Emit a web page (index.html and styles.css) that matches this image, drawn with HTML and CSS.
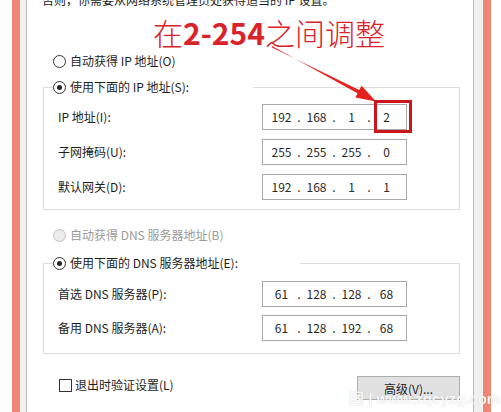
FILE: index.html
```html
<!DOCTYPE html>
<html lang="zh-CN">
  <head>
    <meta charset="UTF-8" />
    <meta name="viewport" content="width=device-width, initial-scale=1.0" />
    <title>IP 设置</title>
    <link rel="stylesheet" href="styles.css">
  </head>
  <body>
    <div class="screen">
      <div class="gutter"></div>
      <div class="frame"></div>
      <div class="chrome"></div>

      <div class="dialog">
        <p class="intro">否则，你需要从网络系统管理员处获得适当的 IP 设置。</p>
        <h1 class="note">在<b>2-254</b>之间调整</h1>

        <label class="radio"><span class="dot"></span>自动获得 IP 地址(O)</label>

        <fieldset class="group group-ip">
          <legend>
            <label class="radio"><span class="dot on"></span>使用下面的 IP 地址(S):</label>
          </legend>
          <div class="row">
            <span class="row-label">IP 地址(I):</span>
            <div class="ip"><span>192</span><i>.</i><span>168</span><i>.</i><span>1</span><i>.</i><span>2</span></div>
          </div>
          <div class="row">
            <span class="row-label">子网掩码(U):</span>
            <div class="ip"><span>255</span><i>.</i><span>255</span><i>.</i><span>255</span><i>.</i><span>0</span></div>
          </div>
          <div class="row">
            <span class="row-label">默认网关(D):</span>
            <div class="ip"><span>192</span><i>.</i><span>168</span><i>.</i><span>1</span><i>.</i><span>1</span></div>
          </div>
        </fieldset>

        <label class="radio radio-dns off"><span class="dot"></span>自动获得 DNS 服务器地址(B)</label>

        <fieldset class="group group-dns">
          <legend>
            <label class="radio"><span class="dot on"></span>使用下面的 DNS 服务器地址(E):</label>
          </legend>
          <div class="row">
            <span class="row-label">首选 DNS 服务器(P):</span>
            <div class="ip"><span>61</span><i>.</i><span>128</span><i>.</i><span>128</span><i>.</i><span>68</span></div>
          </div>
          <div class="row">
            <span class="row-label">备用 DNS 服务器(A):</span>
            <div class="ip"><span>61</span><i>.</i><span>128</span><i>.</i><span>192</span><i>.</i><span>68</span></div>
          </div>
        </fieldset>

        <div class="footer">
          <label class="check"><span class="box"></span>退出时验证设置(L)</label>
          <button type="button" class="advanced">高级(V)...</button>
        </div>
      </div>

      <div class="chrome chrome-right"></div>
      <div class="frame"></div>
      <div class="gutter gutter-right"></div>

      <!-- annotation drawn over the screenshot -->
      <svg class="marks" width="501" height="412" viewBox="0 0 501 412">
        <polygon points="272,46 357.5,93.2 355.5,97.5 376,101.5 361.6,85.8 359.1,90 272,47.6" fill="#e5221d" />
        <rect x="375.5" y="101.5" width="35" height="30" fill="none" stroke="#cc161c" stroke-width="3" />
      </svg>
      <div class="watermark">图 | www.zqcyzg.com</div>
    </div>
  </body>
</html>
```

FILE: styles.css
```css
body {
  margin: 0;
  background: #fff;
  font-family: "Noto Sans CJK SC", sans-serif;
  font-size: 12px;
  color: #1e1e1e;
}

.screen {
  position: relative;
  display: flex;
  height: 412px;
  overflow: hidden;
}

.gutter {
  width: 12px;
  flex: none;
}

.gutter-right {
  width: 10px;
}

.frame {
  width: 8px;
  flex: none;
  background: #ef8577;
}

.chrome {
  width: 6px;
  flex: none;
  background: #f0f0f0;
}

.chrome-right {
  width: 9px;
}

.dialog {
  width: 448px;
  flex: none;
  box-sizing: border-box;
  padding: 0 13px 0 16px;
  border-left: 1px solid #b9b9b9;
  border-right: 1px solid #b9b9b9;
}

.intro {
  margin: -8px 0 0 -1px;
  line-height: 16px;
  white-space: nowrap;
}

.note {
  margin: 6px 0 0 110px;
  font-size: 30px;
  line-height: 36px;
  font-weight: 300;
  color: #d9232a;
  white-space: nowrap;
}

.note b {
  font-weight: bold;
}

.radio {
  display: flex;
  align-items: center;
  gap: 4px;
  height: 16px;
  line-height: 16px;
  margin-top: 3px;
  padding-left: 10px;
  white-space: nowrap;
}

.dot {
  position: relative;
  width: 13px;
  height: 13px;
  box-sizing: border-box;
  border: 1px solid #333;
  border-radius: 50%;
  background: #fff;
}

.dot.on::after {
  content: "";
  position: absolute;
  left: 3px;
  top: 3px;
  width: 5px;
  height: 5px;
  border-radius: 50%;
  background: #262626;
}

.radio.off {
  color: #9a9a9a;
}

.radio.off .dot {
  border-color: #c2c2c2;
  background: #ececec;
}

.radio-dns {
  margin-top: 17px;
}

.group {
  margin: 10px 0 0;
  padding: 9px 0 9px 9px;
  border: 1px solid #dcdcdc;
  min-width: 0;
}

.group legend {
  padding: 0;
  margin: 0;
  background: #fff;
}

.group legend .radio {
  margin: 0;
  padding: 0;
}

.group-ip legend {
  width: 200px;
}

.group-dns {
  margin-top: 12px;
  padding-top: 10px;
  padding-bottom: 12px;
}

.group-dns legend {
  width: 247px;
}

.row {
  display: flex;
  align-items: center;
  padding-left: 5px;
}

.group-ip .row + .row {
  margin-top: 9px;
}

.group-dns .row + .row {
  margin-top: 8px;
}

.row-label {
  width: 204px;
  line-height: 16px;
  white-space: nowrap;
}

.ip {
  display: flex;
  align-items: center;
  width: 145px;
  height: 26px;
  box-sizing: border-box;
  padding-left: 4px;
  border: 1px solid #a8a8a8;
  background: #fff;
  color: #2a2a2a;
  line-height: 16px;
}

.ip span {
  width: 29px;
  text-align: center;
}

.ip i {
  width: 6px;
  text-align: center;
  font-style: normal;
}

.footer {
  display: flex;
  justify-content: space-between;
  align-items: flex-start;
  margin-top: 22px;
}

.check {
  display: flex;
  align-items: center;
  gap: 3px;
  margin: 1px 0 0 16px;
  line-height: 16px;
}

.box {
  width: 13px;
  height: 13px;
  box-sizing: border-box;
  border: 1px solid #333;
  background: #fff;
}

.advanced {
  width: 103px;
  height: 24px;
  padding: 0;
  border: 1px solid #adadad;
  background: #e1e1e1;
  font-family: inherit;
  font-size: 12px;
  color: #1e1e1e;
}

.marks {
  position: absolute;
  left: 0;
  top: 0;
  pointer-events: none;
}

.watermark {
  position: absolute;
  left: 349px;
  top: 387px;
  font-family: "Liberation Sans", "Noto Sans CJK SC", sans-serif;
  font-size: 15px;
  font-weight: bold;
  color: rgba(255, 255, 255, 0.92);
  text-shadow: 0 0 1px rgba(0, 0, 0, 0.2);
  white-space: nowrap;
}
```
